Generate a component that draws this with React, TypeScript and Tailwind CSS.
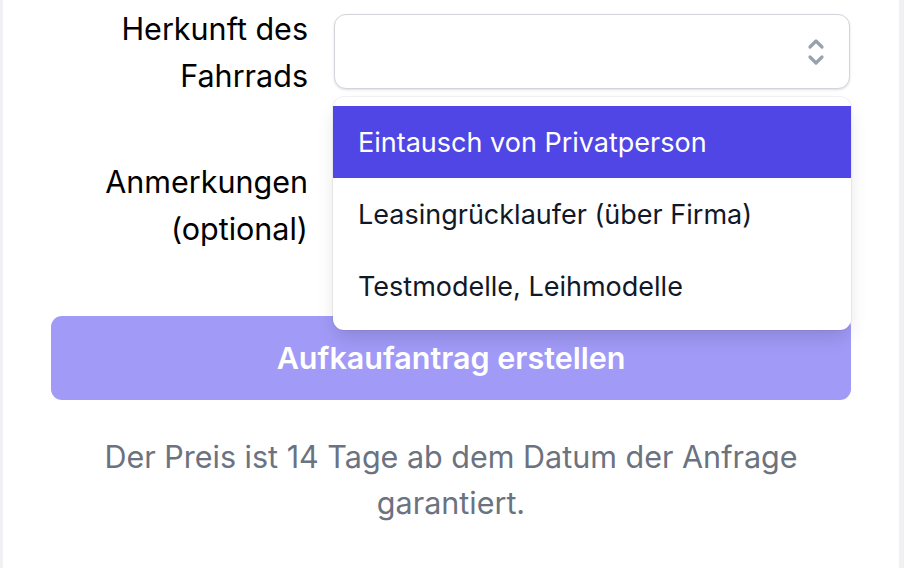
import React from "react";

function UpDown() {
  return (
    <svg width="18" height="32" viewBox="0 0 18 32" fill="none" className="text-gray-400">
      <path d="M3 11 L9 5 L15 11" stroke="currentColor" strokeWidth="3.2" strokeLinecap="round" strokeLinejoin="round" />
      <path d="M3 21 L9 27 L15 21" stroke="currentColor" strokeWidth="3.2" strokeLinecap="round" strokeLinejoin="round" />
    </svg>
  );
}

export default function App() {
  const font = { fontFamily: "Inter, 'Noto Sans', sans-serif" };
  return (
    <div className="w-[904px] h-[568px] bg-[#f0f1f4] overflow-hidden flex" style={font}>
      <div className="ml-[3px] w-[896px] h-full bg-white">
        <div className="ml-[48px] w-[800px] pt-[5px]">
          {/* Row 1 */}
          <div className="flex">
            <div className="w-[257px] text-right text-[30.5px] leading-[47px] text-black">
              Herkunft des<br />Fahrrads
            </div>
            <div className="ml-[26px] flex-1 relative">
              <div className="mt-[9px] h-[75px] w-[516px] rounded-[12px] border-[1.5px] border-[#d1d5db] bg-white shadow-sm flex items-center justify-end pr-[24px]">
                <UpDown />
              </div>
              <div className="absolute left-[-1px] top-[92px] w-[518px] z-10 rounded-[11px] bg-white shadow-[0_10px_20px_-4px_rgba(0,0,0,0.15),0_0_0_1px_rgba(0,0,0,0.05)] pt-[9px] pb-[8px]">
                <div className="h-[72px] bg-[#4f46e5] text-white flex items-center pl-[25px] pt-[2px] text-[27px]">
                  Eintausch von Privatperson
                </div>
                <div className="h-[72px] text-[#111827] flex items-center pl-[25px] pt-[2px] text-[27px]">
                  Leasingrücklaufer (über Firma)
                </div>
                <div className="h-[72px] text-[#111827] flex items-center pl-[25px] pt-[2px] text-[27px]">
                  Testmodelle, Leihmodelle
                </div>
              </div>
            </div>
          </div>
          {/* Row 2 */}
          <div className="flex mt-[59px]">
            <div className="w-[257px] text-right text-[30.5px] leading-[47px] text-black">
              Anmerkungen<br />(optional)
            </div>
            <div className="ml-[26px] flex-1" />
          </div>
          {/* Button */}
          <div className="mt-[64px] h-[84px] rounded-[11px] bg-[#a19af7] flex items-center justify-center text-white font-semibold text-[30.5px]">
            Aufkaufantrag erstellen
          </div>
          <p className="mt-[34px] text-center text-[#6b7280] text-[30.5px] leading-[46px] px-[40px]">
            Der Preis ist 14 Tage ab dem Datum der Anfrage garantiert.
          </p>
        </div>
      </div>
    </div>
  );
}
